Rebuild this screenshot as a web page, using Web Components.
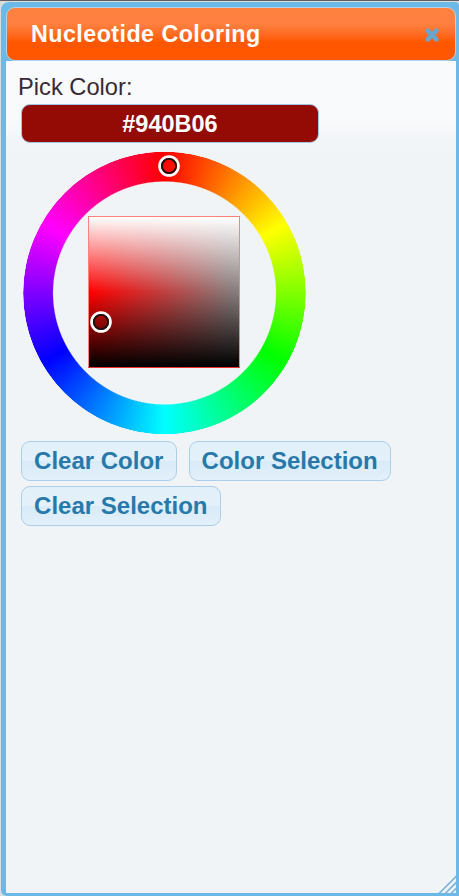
<!DOCTYPE html>
<html lang="en">
<head>
<meta charset="utf-8">
<title>Nucleotide Coloring</title>
<style>
html, body { margin: 0; height: 100%; overflow: hidden; background: #fff; }
body { font-family: "Liberation Sans", Arial, sans-serif; }
</style>
</head>
<body>
<dialog-window>
  <dialog-title slot="title">Nucleotide Coloring</dialog-title>
  <color-field value="#940B06">Pick Color:</color-field>
  <color-wheel></color-wheel>
  <button-row>
    <action-button>Clear Color</action-button>
    <action-button>Color Selection</action-button>
    <action-button>Clear Selection</action-button>
  </button-row>
</dialog-window>
<script>
function define(name, html) {
  const template = document.createElement('template');
  template.innerHTML = html;
  customElements.define(name, class extends HTMLElement {
    constructor() {
      super();
      this.attachShadow({ mode: 'open' }).append(template.content.cloneNode(true));
    }
    connectedCallback() {
      const out = this.shadowRoot.querySelector('.value');
      if (out) {
        out.textContent = this.getAttribute('value');
        out.style.backgroundColor = this.getAttribute('value');
      }
    }
  });
}

define('dialog-window', `
<style>
:host { display: block; box-sizing: border-box; height: 896px; width: 459px; overflow: hidden;
  background: linear-gradient(#5c5d60 0 1px, #dcdcdd 1px 2px, #d7dce0 2px); }
.frame { box-sizing: border-box; height: 896px; width: 459px; padding-top: 2px; padding-left: 1px; }
.window { box-sizing: border-box; display: flex; flex-direction: column; width: 458px; height: 894px;
  padding: 5px 3px 3px 5px; background: #6cb8e7; border-radius: 8px 4px 0 6px; }
.content { position: relative; flex: 1; box-sizing: border-box; padding: 10px 12px 0;
  background: linear-gradient(#f9fafc 0, #f9fafc 58px, #f0f4f7 86px); }
svg { position: absolute; right: 0; bottom: 0; }
</style>
<div class="frame"><div class="window">
  <slot name="title"></slot>
  <div class="content"><slot></slot>
    <svg width="18" height="18" viewBox="0 0 18 18" fill="none" stroke="#7fb3d9" stroke-width="1.7"><path d="M1 18.5 18.5 1M7.2 18.5 18.5 7.2M13 18.5 18.5 13"/></svg>
  </div>
</div></div>`);

define('dialog-title', `
<style>
:host { display: flex; box-sizing: border-box; width: 450px; height: 54px; align-items: center; justify-content: space-between;
  padding: 0 15px 0 24px; border: 1px solid #b3d3e6; border-radius: 9px;
  background: linear-gradient(#ff8140 0, #ff8040 30%, #ff7029 46%, #ff5700 66%, #ff5700 100%);
  color: #fff; font-weight: bold; font-size: 23.3px; letter-spacing: .44px; line-height: 27px; white-space: nowrap; }
svg { display: block; margin-top: 2px; }
</style>
<slot></slot>
<svg width="16" height="16" viewBox="0 0 16 16" stroke="#69a6cf" stroke-width="4.6" stroke-linecap="round"><path d="M3.6 3.6 12.4 12.4M12.4 3.6 3.6 12.4"/></svg>`);

define('color-field', `
<style>
:host { display: block; }
.label { display: block; color: #362b36; font-size: 23.7px; line-height: 32px; height: 33px; }
.value { box-sizing: border-box; width: 298px; height: 39px; margin-left: 3px; border: 1px solid #a0c8e6; border-radius: 9px;
  color: #fff; font-size: 23.5px; font-weight: bold; line-height: 38px; text-align: center; }
</style>
<span class="label"><slot></slot></span><div class="value"></div>`);

define('color-wheel', `
<style>
:host { display: grid; grid-template: 283px / 283px; position: relative; width: 283px; height: 283px; margin: 9px 0 0 5px; place-items: center; }
.ring { grid-area: 1/1; width: 283px; height: 283px; border-radius: 50%; transform: translateY(-.5px);
  background: conic-gradient(#f00, #ff0, #0f0, #0ff, #00f, #f0f, #f00);
  -webkit-mask: radial-gradient(circle, transparent 110.9px, #000 112.1px, #000 140.8px, transparent 141.8px);
  mask: radial-gradient(circle, transparent 110.9px, #000 112.1px, #000 140.8px, transparent 141.8px); }
.square { grid-area: 1/1; box-sizing: border-box; width: 152px; height: 152px; margin: 0 1px 3px 0; border: 1px solid #ff817b;
  border-bottom-color: #f03030;
  background: linear-gradient(#fff, rgba(255,255,255,0) 50%, rgba(0,0,0,0) 50%, #000) padding-box,
    linear-gradient(90deg, rgba(128,128,128,0), #808080) padding-box, #f00; }
.marker { position: absolute; width: 22px; height: 22px; }
.hue { left: 135px; top: 3px; } .shade { left: 67px; top: 159px; }
</style>
<div class="ring"></div><div class="square"></div>
<svg class="marker hue" viewBox="0 0 22 22"><circle cx="11" cy="11" r="9.4" fill="none" stroke="#fff" stroke-width="2.8"/><circle cx="11" cy="11" r="7.1" fill="none" stroke="#1c0f12" stroke-width="1.9"/></svg>
<svg class="marker shade" viewBox="0 0 22 22"><circle cx="11" cy="11" r="9.4" fill="none" stroke="#fff" stroke-width="2.8"/><circle cx="11" cy="11" r="7.1" fill="none" stroke="#1c0f12" stroke-width="1.9"/></svg>`);

define('button-row', `
<style>
:host { display: flex; flex-wrap: wrap; gap: 5px 12px; margin: 6px 0 0 3px; width: 400px; }
</style><slot></slot>`);

define('action-button', `
<style>
:host { display: block; }
button { display: block; box-sizing: border-box; height: 40px; margin: 0; padding: 0 12.08px; border: 1px solid #abcfea; border-radius: 9px;
  background: linear-gradient(#e2f0fa 0, #e4f1fa 50%, #d8ebf8 50%, #e3f0fa 100%);
  color: #2779aa; font: bold 24px/38px "Liberation Sans", Arial, sans-serif; white-space: nowrap; }
</style>
<button type="button"><slot></slot></button>`);
</script>
</body>
</html>
